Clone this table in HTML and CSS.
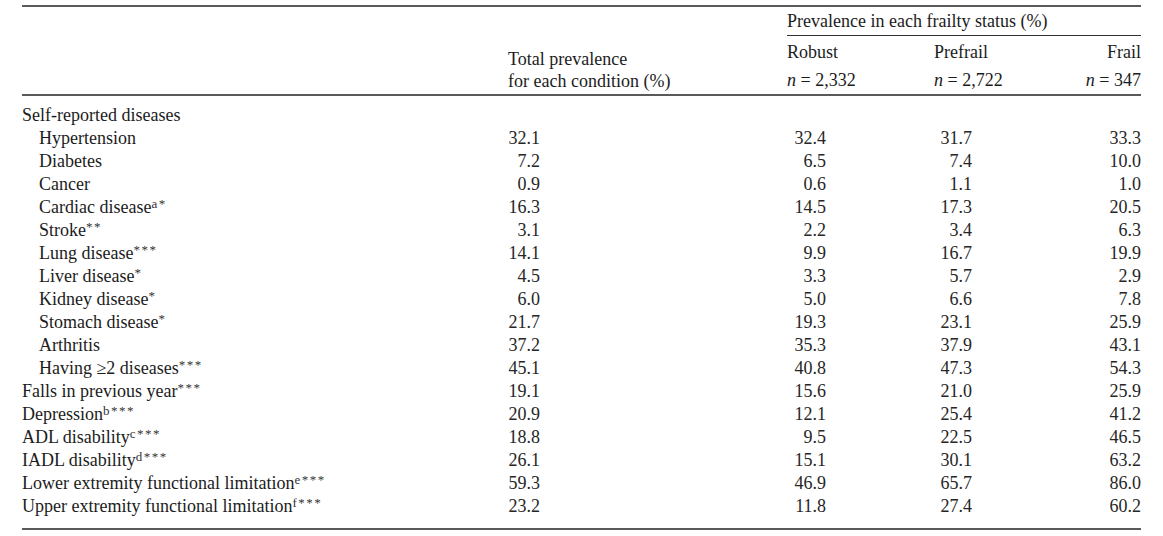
FILE: index.html
```html
<!DOCTYPE html>
<html>
<head>
<meta charset="utf-8">
<link rel="stylesheet" href="styles.css">
</head>
<body>
<table class="tbl">
  <colgroup>
    <col class="c-label"><col class="c-total"><col class="c-robust"><col class="c-pre"><col class="c-frail">
  </colgroup>
  <thead>
    <tr class="h1">
      <th></th><th></th>
      <th colspan="3" class="group">Prevalence in each frailty status (%)</th>
    </tr>
    <tr class="h2">
      <th></th>
      <th class="total">Total prevalence<br>for each condition (%)</th>
      <th class="fs">Robust<br><i>n</i> = 2,332</th>
      <th class="fs">Prefrail<br><i>n</i> = 2,722</th>
      <th class="fs right">Frail<br><i>n</i> = 347</th>
    </tr>
  </thead>
  <tbody>
    <tr class="first"><td class="lab">Self-reported diseases</td><td></td><td></td><td></td><td></td></tr>
    <tr><td class="lab sub">Hypertension</td><td class="n1">32.1</td><td class="n2">32.4</td><td class="n3">31.7</td><td class="n4">33.3</td></tr>
    <tr><td class="lab sub">Diabetes</td><td class="n1">7.2</td><td class="n2">6.5</td><td class="n3">7.4</td><td class="n4">10.0</td></tr>
    <tr><td class="lab sub">Cancer</td><td class="n1">0.9</td><td class="n2">0.6</td><td class="n3">1.1</td><td class="n4">1.0</td></tr>
    <tr><td class="lab sub">Cardiac disease<sup>a*</sup></td><td class="n1">16.3</td><td class="n2">14.5</td><td class="n3">17.3</td><td class="n4">20.5</td></tr>
    <tr><td class="lab sub">Stroke<sup>**</sup></td><td class="n1">3.1</td><td class="n2">2.2</td><td class="n3">3.4</td><td class="n4">6.3</td></tr>
    <tr><td class="lab sub">Lung disease<sup>***</sup></td><td class="n1">14.1</td><td class="n2">9.9</td><td class="n3">16.7</td><td class="n4">19.9</td></tr>
    <tr><td class="lab sub">Liver disease<sup>*</sup></td><td class="n1">4.5</td><td class="n2">3.3</td><td class="n3">5.7</td><td class="n4">2.9</td></tr>
    <tr><td class="lab sub">Kidney disease<sup>*</sup></td><td class="n1">6.0</td><td class="n2">5.0</td><td class="n3">6.6</td><td class="n4">7.8</td></tr>
    <tr><td class="lab sub">Stomach disease<sup>*</sup></td><td class="n1">21.7</td><td class="n2">19.3</td><td class="n3">23.1</td><td class="n4">25.9</td></tr>
    <tr><td class="lab sub">Arthritis</td><td class="n1">37.2</td><td class="n2">35.3</td><td class="n3">37.9</td><td class="n4">43.1</td></tr>
    <tr><td class="lab sub">Having ≥2 diseases<sup>***</sup></td><td class="n1">45.1</td><td class="n2">40.8</td><td class="n3">47.3</td><td class="n4">54.3</td></tr>
    <tr><td class="lab">Falls in previous year<sup>***</sup></td><td class="n1">19.1</td><td class="n2">15.6</td><td class="n3">21.0</td><td class="n4">25.9</td></tr>
    <tr><td class="lab">Depression<sup>b***</sup></td><td class="n1">20.9</td><td class="n2">12.1</td><td class="n3">25.4</td><td class="n4">41.2</td></tr>
    <tr><td class="lab">ADL disability<sup>c***</sup></td><td class="n1">18.8</td><td class="n2">9.5</td><td class="n3">22.5</td><td class="n4">46.5</td></tr>
    <tr><td class="lab">IADL disability<sup>d***</sup></td><td class="n1">26.1</td><td class="n2">15.1</td><td class="n3">30.1</td><td class="n4">63.2</td></tr>
    <tr><td class="lab">Lower extremity functional limitation<sup>e***</sup></td><td class="n1">59.3</td><td class="n2">46.9</td><td class="n3">65.7</td><td class="n4">86.0</td></tr>
    <tr class="last"><td class="lab">Upper extremity functional limitation<sup>f***</sup></td><td class="n1">23.2</td><td class="n2">11.8</td><td class="n3">27.4</td><td class="n4">60.2</td></tr>
  </tbody>
</table>
</body>
</html>
```
FILE: styles.css
```css
html, body {
  margin: 0;
  padding: 0;
  background: #fff;
}
body {
  font-family: "Liberation Serif", "Times New Roman", serif;
  color: #1c1c1c;
}
.tbl {
  margin: 5px 0 0 22px;
  width: 1119px;
  border-collapse: collapse;
  table-layout: fixed;
  border-top: 2px solid #5a5a5a;
  border-bottom: 2px solid #5a5a5a;
}
.c-label { width: 486px; }
.c-total { width: 279px; }
.c-robust { width: 147px; }
.c-pre { width: 149px; }
.c-frail { width: 58px; }

th, td {
  padding: 0;
  font-weight: normal;
  text-align: left;
  vertical-align: middle;
}
thead tr.h2 th { border-bottom: 2px solid #5a5a5a; }
.h1 th {
  height: 28px;
  font-size: 18px;
  line-height: 28px;
}
.h1 th.group {
  border-bottom: 1px solid #333;
}
.h2 th {
  font-size: 18px;
  vertical-align: bottom;
  height: 56px;
}
.h2 th.total {
  line-height: 22px;
  padding-bottom: 2px;
}
.h2 th.fs {
  line-height: 28px;
}
.h2 th.right { text-align: right; }
.h2 i { font-style: italic; }

tbody td {
  height: 23px;
  line-height: 23px;
  font-size: 18px;
}
tbody tr.first td { padding-top: 8px; }
tbody tr.last td { padding-bottom: 10px; }
.lab { white-space: nowrap; }
.sub { padding-left: 17px; }
sup {
  font-size: 13px;
  line-height: 0;
  vertical-align: 5px;
  letter-spacing: 1.5px;
  color: #333;
}
td.n1, td.n2, td.n3, td.n4 {
  text-align: right;
  color: #262626;
}
td.n1 { padding-right: 247px; }
td.n2 { padding-right: 108px; }
td.n3 { padding-right: 111px; }
td.n4 { padding-right: 0; }
```
